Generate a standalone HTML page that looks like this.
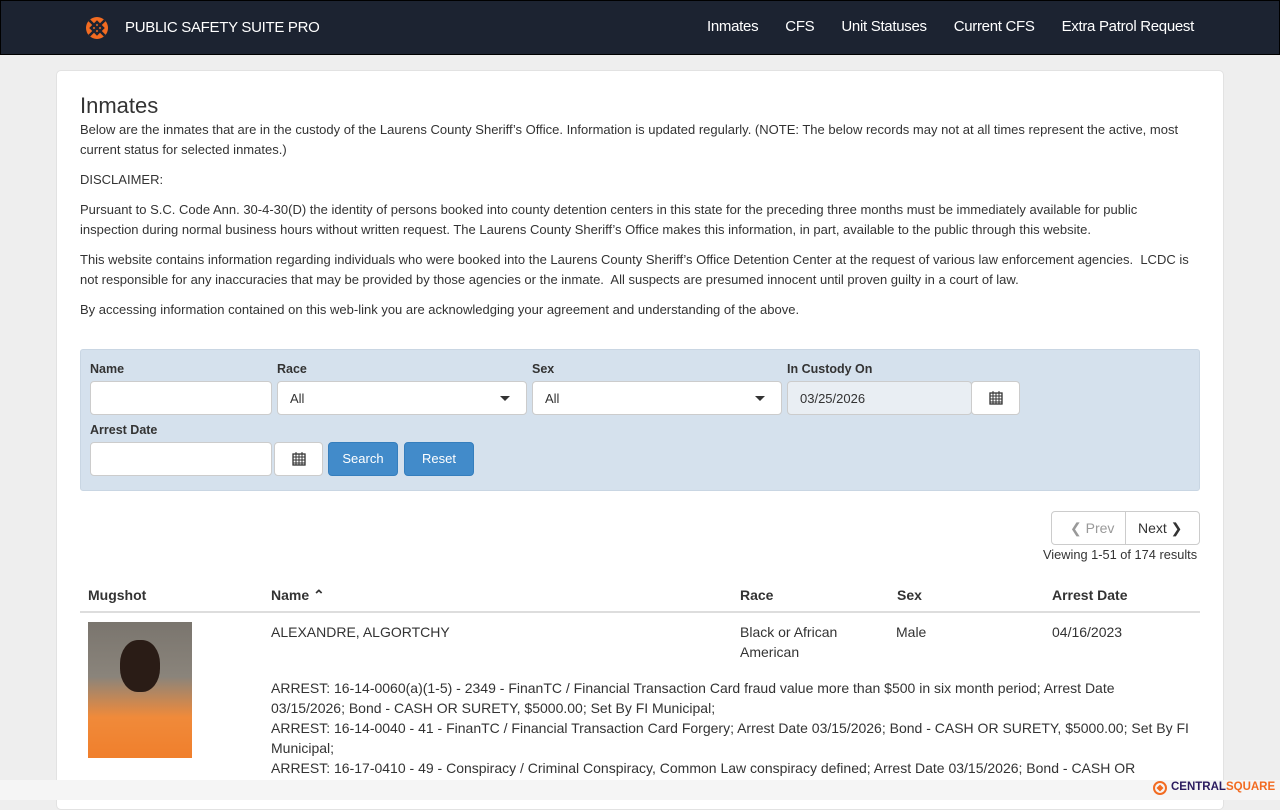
<!DOCTYPE html>
<html><head><meta charset="utf-8"><style>
*{box-sizing:border-box;margin:0;padding:0}
body{width:1280px;height:800px;overflow:hidden;background:#eeeeee;font-family:"Liberation Sans",sans-serif;color:#333;position:relative}
.nav{position:absolute;left:0;top:0;width:1280px;height:55px;background:#1c2331;border:1px solid #000;}
.brand{position:absolute;left:124px;top:18px;color:#fff;font-size:15px;letter-spacing:-0.3px}
.logo{position:absolute;left:84px;top:15px}
.links{position:absolute;right:85px;top:17px;color:#fff;font-size:15px}
.links span{margin-left:27px;letter-spacing:-0.3px}
.card{position:absolute;left:56px;top:70px;width:1168px;height:740px;background:#fff;border:1px solid #e2e2e2;border-radius:5px}
h1{position:absolute;left:80px;top:93px;font-size:22px;font-weight:normal;color:#333}
.txt{position:absolute;left:80px;top:120px;width:1130px;font-size:13px;line-height:20px;color:#333;white-space:nowrap}
.txt p{margin-bottom:10px}
.filter{position:absolute;left:80px;top:349px;width:1120px;height:142px;background:#d5e1ed;border:1px solid #c9d6e3;border-radius:3px}
.lbl{position:absolute;font-size:12.5px;font-weight:bold;color:#333}
.inp{position:absolute;height:34px;background:#fff;border:1px solid #ccc;border-radius:4px;font-size:13px;padding:9px 12px}
.btn{position:absolute;height:34px;background:#428bca;border:1px solid #357ebd;border-radius:4px;color:#fff;font-size:13px;text-align:center;line-height:32px}
.caret{position:absolute;right:16px;top:14px;border-left:5px solid transparent;border-right:5px solid transparent;border-top:5px solid #333}
.cal{position:absolute;left:50%;top:50%;transform:translate(-50%,-50%)}
.pg{position:absolute;left:1051px;top:511px;width:149px;height:34px;border:1px solid #ccc;border-radius:4px;font-size:14px}
.th{position:absolute;top:587px;font-size:14px;font-weight:bold;color:#333}
.td{position:absolute;font-size:14px;line-height:20px;color:#333}
.foot{position:absolute;left:0;top:780px;width:1280px;height:20px;background:#f5f5f5}
</style></head><body>
<div class="nav">
<svg class="logo" width="24" height="24" viewBox="0 0 24 24"><circle cx="12" cy="12" r="11" fill="#f26b21"/><rect x="6.5" y="6.5" width="11" height="11" transform="rotate(45 12 12)" fill="#1c2331"/><rect x="9" y="9" width="6" height="6" transform="rotate(45 12 12)" fill="#f26b21"/><path d="M1 12h22M12 1v22" stroke="#1c2331" stroke-width="2.5" transform="rotate(45 12 12)"/></svg>
<div class="brand">PUBLIC SAFETY SUITE PRO</div>
<div class="links"><span>Inmates</span><span>CFS</span><span>Unit Statuses</span><span>Current CFS</span><span>Extra Patrol Request</span></div>
</div>
<div class="card"></div>
<h1>Inmates</h1>
<div class="txt">
<p>Below are the inmates that are in the custody of the Laurens County Sheriff’s Office. Information is updated regularly. (NOTE: The below records may not at all times represent the active, most<br>current status for selected inmates.)</p>
<p>DISCLAIMER:</p>
<p>Pursuant to S.C. Code Ann. 30-4-30(D) the identity of persons booked into county detention centers in this state for the preceding three months must be immediately available for public<br>inspection during normal business hours without written request. The Laurens County Sheriff’s Office makes this information, in part, available to the public through this website.</p>
<p>This website contains information regarding individuals who were booked into the Laurens County Sheriff’s Office Detention Center at the request of various law enforcement agencies.&nbsp; LCDC is<br>not responsible for any inaccuracies that may be provided by those agencies or the inmate.&nbsp; All suspects are presumed innocent until proven guilty in a court of law.</p>
<p>By accessing information contained on this web-link you are acknowledging your agreement and understanding of the above.</p>
</div>
<div class="filter"></div>
<div class="lbl" style="left:90px;top:362px">Name</div>
<div class="lbl" style="left:277px;top:362px">Race</div>
<div class="lbl" style="left:532px;top:362px">Sex</div>
<div class="lbl" style="left:787px;top:362px">In Custody On</div>
<div class="inp" style="left:90px;top:381px;width:182px"></div>
<div class="inp" style="left:277px;top:381px;width:250px">All<div class="caret"></div></div>
<div class="inp" style="left:532px;top:381px;width:250px">All<div class="caret"></div></div>
<div class="inp" style="left:787px;top:381px;width:185px;background:#e9eef3">03/25/2026</div>
<div class="inp" style="left:971px;top:381px;width:49px"><svg class="cal" width="14" height="14" viewBox="0 0 14 14"><rect x="1" y="2" width="12" height="11" fill="none" stroke="#333" stroke-width="1.3"/><path d="M1 5h12M1 8h12M1 11h12M4 2v11M7 2v11M10 2v11M4 0v3M10 0v3" stroke="#333" stroke-width="1"/></svg></div>
<div class="lbl" style="left:90px;top:423px">Arrest Date</div>
<div class="inp" style="left:90px;top:442px;width:182px"></div>
<div class="inp" style="left:274px;top:442px;width:49px"><svg class="cal" width="14" height="14" viewBox="0 0 14 14"><rect x="1" y="2" width="12" height="11" fill="none" stroke="#333" stroke-width="1.3"/><path d="M1 5h12M1 8h12M1 11h12M4 2v11M7 2v11M10 2v11M4 0v3M10 0v3" stroke="#333" stroke-width="1"/></svg></div>
<div class="btn" style="left:328px;top:442px;width:70px">Search</div>
<div class="btn" style="left:404px;top:442px;width:70px">Reset</div>
<div class="pg"><span style="position:absolute;left:18px;top:8px;color:#999">❮ Prev</span><div style="position:absolute;left:73px;top:0;height:32px;border-left:1px solid #ccc"></div><span style="position:absolute;left:86px;top:8px;color:#333">Next ❯</span></div>
<div class="td" style="left:1043px;top:545px;font-size:12.8px">Viewing 1-51 of 174 results</div>
<div class="th" style="left:88px">Mugshot</div>
<div class="th" style="left:271px">Name ⌃</div>
<div class="th" style="left:740px">Race</div>
<div class="th" style="left:897px">Sex</div>
<div class="th" style="left:1052px">Arrest Date</div>
<div style="position:absolute;left:80px;top:611px;width:1120px;height:2px;background:#ddd"></div>
<div style="position:absolute;left:88px;top:622px;width:104px;height:136px;background:linear-gradient(#7a756e 0%,#8a847b 40%,#f08a3a 70%,#f07f2c 100%)"><div style="position:absolute;left:32px;top:18px;width:40px;height:52px;border-radius:45%;background:#2a1c16"></div></div>
<div class="td" style="left:271px;top:622px">ALEXANDRE, ALGORTCHY</div>
<div class="td" style="left:740px;top:622px">Black or African<br>American</div>
<div class="td" style="left:896px;top:622px">Male</div>
<div class="td" style="left:1052px;top:622px">04/16/2023</div>
<div class="td" style="left:271px;top:678px;width:918px">ARREST: 16-14-0060(a)(1-5) - 2349 - FinanTC / Financial Transaction Card fraud value more than $500 in six month period; Arrest Date 03/15/2026; Bond - CASH OR SURETY, $5000.00; Set By FI Municipal;<br>ARREST: 16-14-0040 - 41 - FinanTC / Financial Transaction Card Forgery; Arrest Date 03/15/2026; Bond - CASH OR SURETY, $5000.00; Set By FI Municipal;<br>ARREST: 16-17-0410 - 49 - Conspiracy / Criminal Conspiracy, Common Law conspiracy defined; Arrest Date 03/15/2026; Bond - CASH OR</div>
<div class="foot"><svg style="position:absolute;left:1153px;top:1px" width="14" height="14" viewBox="0 0 14 14"><circle cx="7" cy="7" r="6" fill="none" stroke="#f26b21" stroke-width="2"/><rect x="4.5" y="4.5" width="5" height="5" transform="rotate(45 7 7)" fill="#f26b21"/></svg><span style="position:absolute;left:1171px;top:1px;font-size:11.5px;font-weight:bold;color:#2a1a5e">CENTRAL<span style="color:#f26b21">SQUARE</span></span></div>
</body></html>
